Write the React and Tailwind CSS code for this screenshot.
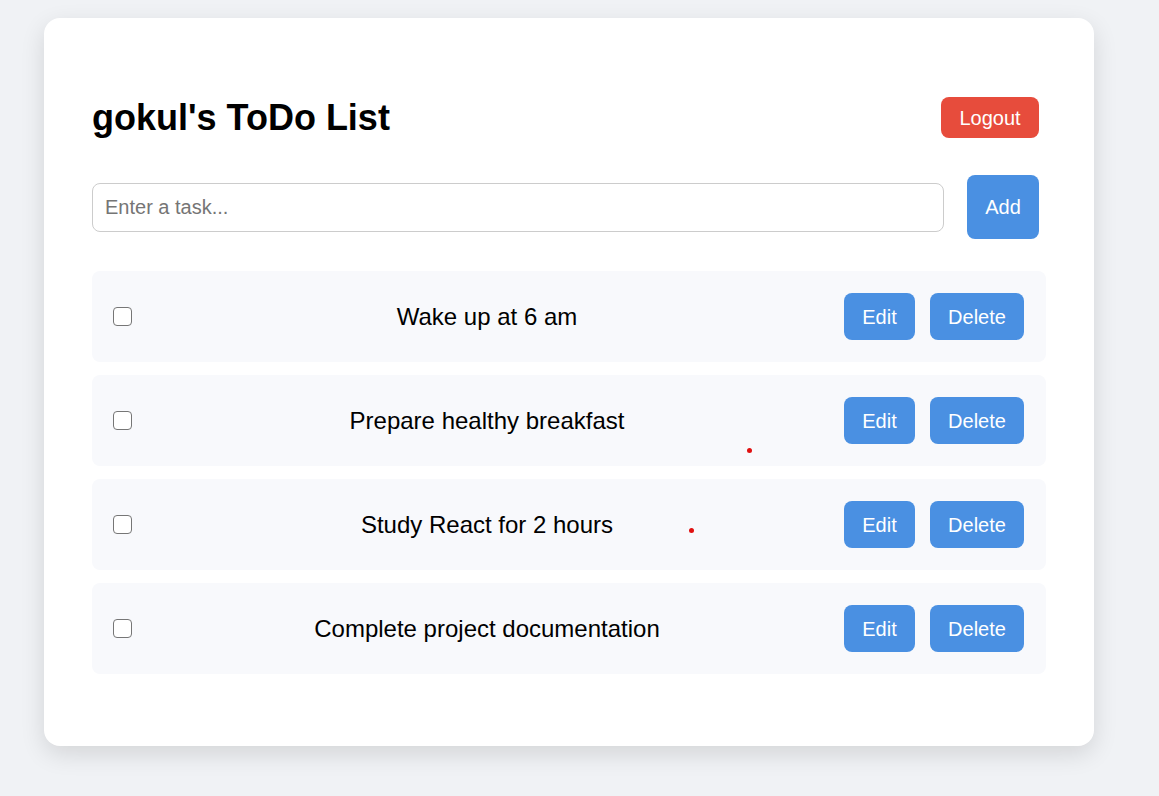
import { useState } from 'react'

const initialTodos = [
  { id: 1, text: 'Wake up at 6 am', done: false },
  { id: 2, text: 'Prepare healthy breakfast', done: false },
  { id: 3, text: 'Study React for 2 hours', done: false },
  { id: 4, text: 'Complete project documentation', done: false },
]

function TodoItem({ todo, onToggle }) {
  return (
    <li className="flex h-[91px] items-center rounded-lg bg-[#f8f9fc] pl-[21px] pr-[22px]">
      <input
        type="checkbox"
        checked={todo.done}
        onChange={() => onToggle(todo.id)}
        className="h-[19px] w-[19px] shrink-0 appearance-none rounded-[4px] border-[1.5px] border-[#767676] bg-white"
      />
      <span className="ml-[14px] mr-4 flex-1 text-center text-[24px] text-black">{todo.text}</span>
      <div className="flex items-center gap-[15px]">
        <button
          type="button"
          className="h-[47px] w-[71px] rounded-lg bg-[#4a90e2] text-[20px] text-white"
        >
          Edit
        </button>
        <button
          type="button"
          className="h-[47px] w-[94px] rounded-lg bg-[#4a90e2] text-[20px] text-white"
        >
          Delete
        </button>
      </div>
    </li>
  )
}

export default function App() {
  const [todos, setTodos] = useState(initialTodos)
  const [task, setTask] = useState('')

  const toggle = (id) => {
    setTodos((current) => current.map((t) => (t.id === id ? { ...t, done: !t.done } : t)))
  }

  return (
    <div className="relative min-h-screen bg-[#f0f2f5] pl-[44px] pt-[18px] font-['Liberation_Sans',Arial,sans-serif]">
      <div className="h-[728px] w-[1050px] rounded-2xl bg-white px-12 pt-[79px] shadow-[0_8px_24px_rgba(0,0,0,0.12)]">
        <div className="flex h-[41px] items-center justify-between pr-[7px]">
          <h1 className="text-[36px] font-bold leading-[38px] text-black">gokul's ToDo List</h1>
          <button
            type="button"
            className="h-[41px] w-[98px] rounded-lg bg-[#e74c3c] text-[20px] text-white"
          >
            Logout
          </button>
        </div>

        <div className="mt-[37px] flex items-center gap-[23px] pr-[7px]">
          <input
            type="text"
            value={task}
            onChange={(e) => setTask(e.target.value)}
            placeholder="Enter a task..."
            className="h-[49px] flex-1 rounded-lg border border-[#ccc] px-3 text-[20px] text-black placeholder:text-[#757575] outline-none"
          />
          <button
            type="button"
            className="h-[64px] w-[72px] rounded-lg bg-[#4a90e2] text-[20px] text-white"
          >
            Add
          </button>
        </div>

        <ul className="mt-[32px] flex flex-col gap-[13px]">
          {todos.map((todo) => (
            <TodoItem key={todo.id} todo={todo} onToggle={toggle} />
          ))}
        </ul>
      </div>

      <span className="absolute left-[747px] top-[448px] h-[5px] w-[5px] rounded-full bg-[#e01010]" />
      <span className="absolute left-[689px] top-[528px] h-[5px] w-[5px] rounded-full bg-[#e01010]" />
    </div>
  )
}
